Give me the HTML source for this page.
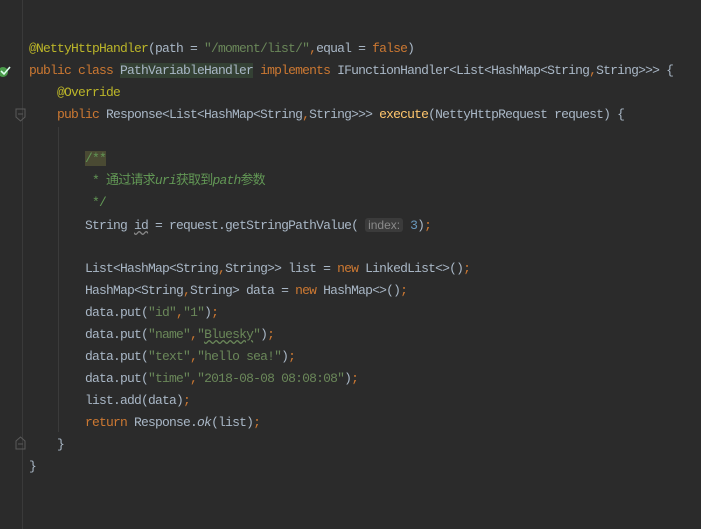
<!DOCTYPE html>
<html><head><meta charset="utf-8"><style>
html,body{margin:0;padding:0;background:#2b2b2b;width:701px;height:529px;overflow:hidden}
.ed{position:relative;width:701px;height:529px;font-family:"Liberation Mono","Noto Sans CJK SC",monospace;font-size:13px;letter-spacing:-0.8px;color:#a9b7c6}
.l{position:absolute;left:29px;white-space:pre;line-height:22px;height:22px}
.k{color:#cc7832}.a{color:#bbb529}.s{color:#6a8759}.c{color:#629755}.n{color:#6897bb}.g{color:#808080}
.hl{background:#344134}
.gut{position:absolute;left:22px;top:0;width:1px;height:529px;background:#3a3a3a}
.ig{position:absolute;width:1px;background:#3b3b3b}
.hint{background:#3b3b3b;color:#8a8a8a;font-family:"Liberation Sans",sans-serif;font-size:12px;letter-spacing:0;border-radius:3px;padding:0 3px}
.wv{text-decoration:underline wavy #6a8759}
</style></head><body><div class="ed">
<div class="gut"></div>
<div class="ig" style="left:58px;top:127px;height:305px"></div>
<svg style="position:absolute;left:0;top:62px" width="14" height="18"><circle cx="3" cy="10" r="5" fill="#4a9a4a"/><path d="M1 9l3 3 6-7" stroke="#dfe" stroke-width="1.6" fill="none"/></svg>
<svg style="position:absolute;left:15px;top:108px" width="12" height="14"><path d="M1 1h9v8l-4.5 4l-4.5-4z" fill="none" stroke="#5a5a5a"/><path d="M3 6h5" stroke="#5a5a5a"/></svg>
<svg style="position:absolute;left:15px;top:436px" width="12" height="14"><path d="M1 13h9v-8l-4.5-4l-4.5 4z" fill="none" stroke="#5a5a5a"/><path d="M3 8h5" stroke="#5a5a5a"/></svg>
<div class="l" style="top:38px"><span class="a">@NettyHttpHandler</span>(path = <span class="s">"/moment/list/"</span><span class="k">,</span>equal = <span class="k">false</span>)</div>
<div class="l" style="top:60px"><span class="k">public class </span><span class="hl">PathVariableHandler</span> <span class="k">implements </span>IFunctionHandler&lt;List&lt;HashMap&lt;String<span class="k">,</span>String&gt;&gt;&gt; {</div>
<div class="l" style="top:82px">    <span class="a">@Override</span></div>
<div class="l" style="top:104px">    <span class="k">public </span>Response&lt;List&lt;HashMap&lt;String<span class="k">,</span>String&gt;&gt;&gt; <span style="color:#ffc66d">execute</span>(NettyHttpRequest request) {</div>
<div class="l" style="top:148px">        <span class="c" style="background:#4a4a33">/**</span></div>
<div class="l" style="top:170px">        <span class="c"> * 通过请求<i>uri</i>获取到<i>path</i>参数</span></div>
<div class="l" style="top:192px">        <span class="c"> */</span></div>
<div class="l" style="top:214px">        String <span class="wv" style="text-decoration-color:#888">id</span> = request.getStringPathValue( <span class="hint">index:</span> <span class="n">3</span>)<span class="k">;</span></div>
<div class="l" style="top:258px">        List&lt;HashMap&lt;String<span class="k">,</span>String&gt;&gt; list = <span class="k">new </span>LinkedList&lt;&gt;()<span class="k">;</span></div>
<div class="l" style="top:280px">        HashMap&lt;String<span class="k">,</span>String&gt; data = <span class="k">new </span>HashMap&lt;&gt;()<span class="k">;</span></div>
<div class="l" style="top:302px">        data.put(<span class="s">"id"</span><span class="k">,</span><span class="s">"1"</span>)<span class="k">;</span></div>
<div class="l" style="top:324px">        data.put(<span class="s">"name"</span><span class="k">,</span><span class="s">"<span class="wv">Bluesky</span>"</span>)<span class="k">;</span></div>
<div class="l" style="top:346px">        data.put(<span class="s">"text"</span><span class="k">,</span><span class="s">"hello sea!"</span>)<span class="k">;</span></div>
<div class="l" style="top:368px">        data.put(<span class="s">"time"</span><span class="k">,</span><span class="s">"2018-08-08 08:08:08"</span>)<span class="k">;</span></div>
<div class="l" style="top:390px">        list.add(data)<span class="k">;</span></div>
<div class="l" style="top:412px">        <span class="k">return </span>Response.<i>ok</i>(list)<span class="k">;</span></div>
<div class="l" style="top:434px">    }</div>
<div class="l" style="top:456px">}</div>
</div></body></html>
